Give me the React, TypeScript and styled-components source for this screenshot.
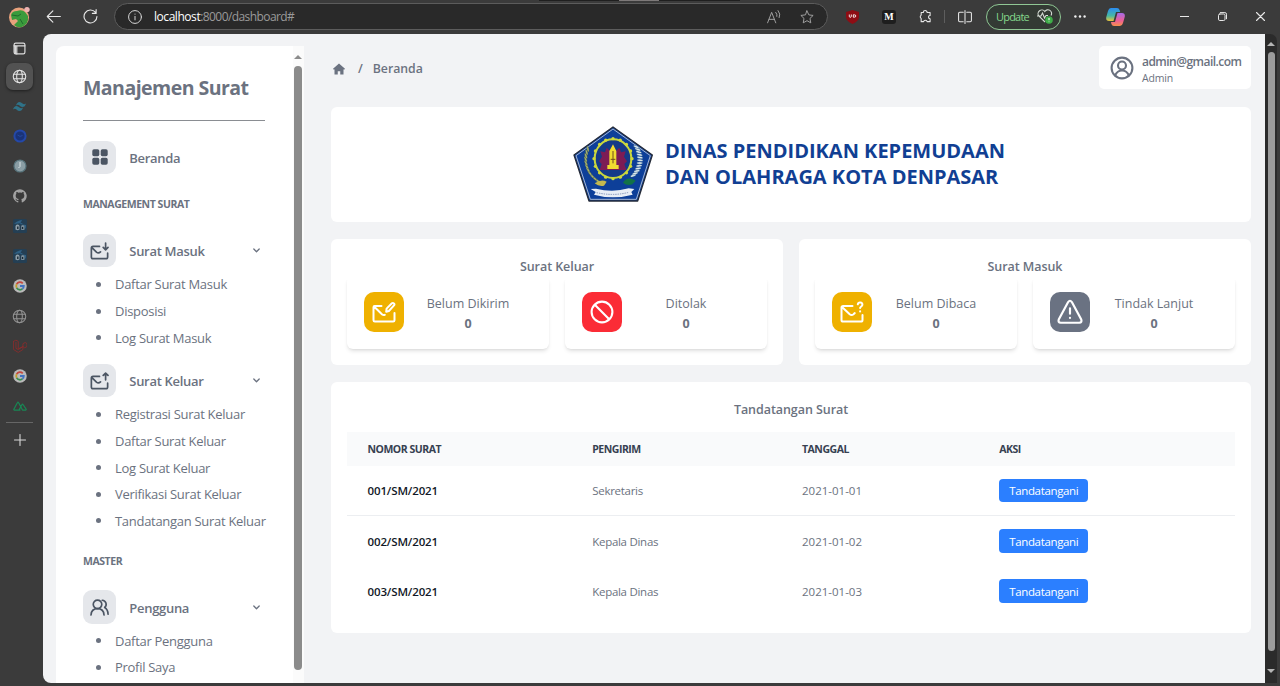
import React from "react";
import styled, { createGlobalStyle } from "styled-components";

const Global = createGlobalStyle`
  * { box-sizing: border-box; }
  body { margin: 0; background: #3b3b3b; overflow: hidden; font-family: "Open Sans", "Noto Sans", sans-serif; }
  h1, h2, h3, p, ul { margin: 0; padding: 0; font-weight: inherit; font-size: inherit; }
  svg { display: block; flex: none; }
  button { font-family: inherit; }
`;

const Window = styled.div`
  position: relative;
  display: flex;
  flex-direction: column;
  width: 1280px;
  height: 686px;
  background: #3b3b3b;
`;

/* ---------- browser chrome ---------- */
/* Handle that hangs over the top edge of the window. */
const EdgeHandle = styled.span`
  position: absolute;
  top: 0;
  left: 539px;
  width: 201px;
  height: 1px;
  background: linear-gradient(90deg, #1f1f1f 80px, #7d7979 80px, #7d7979 120px, #1f1f1f 120px);
`;
const TopBar = styled.header`
  display: flex;
  align-items: center;
  height: 34px;
  flex: none;
  padding: 0 8px 1px 8px;
  color: #e8e8e8;
`;
const AddressBar = styled.div`
  display: flex;
  align-items: center;
  width: 714px;
  height: 27px;
  margin-left: 16px;
  padding: 0 13px 0 13px;
  border: 1px solid #5c5c5c;
  border-radius: 14px;
  background: #292929;
`;
const Url = styled.div`
  flex: 1;
  margin-left: 12px;
  font-size: 12px;
  line-height: 16px;
  letter-spacing: -0.58px;
  color: #9a9a9a;
  white-space: nowrap;
`;
const Host = styled.span`
  color: #ffffff;
  letter-spacing: -0.45px;
`;
const Gap = styled.span<{ $w: number }>`
  flex: none;
  width: ${(p) => p.$w}px;
`;
const ToolDivider = styled.span`
  width: 1px;
  height: 13px;
  background: #5e5e5e;
`;
const MediumBadge = styled.span`
  width: 14px;
  height: 14px;
  border-radius: 3px;
  background: #1e1e1e;
  color: #fff;
  font: 700 10px/14px "Liberation Serif", serif;
  text-align: center;
`;
const UpdatePill = styled.span`
  display: flex;
  align-items: center;
  justify-content: space-between;
  width: 75px;
  height: 26px;
  padding: 0 7px 0 9px;
  border: 1px solid #8fc794;
  border-radius: 13px;
  background: #333a34;
  color: #84d88b;
  font-size: 11px;
  letter-spacing: -0.8px;
`;
const Body = styled.div`
  display: flex;
  flex: 1;
  min-height: 0;
  padding-bottom: 3px;
`;
const TabStrip = styled.nav`
  display: flex;
  flex-direction: column;
  align-items: center;
  width: 43px;
  margin-top: -1px;
  padding-right: 4px;
`;
const Tab = styled.span<{ $active?: boolean }>`
  display: flex;
  align-items: center;
  justify-content: center;
  flex: none;
  width: 27px;
  height: ${(p) => (p.$active ? 27 : 30)}px;
  margin-bottom: ${(p) => (p.$active ? 1 : 0)}px;
  border-radius: 7px;
  background: ${(p) => (p.$active ? "#525252" : "transparent")};
  box-shadow: ${(p) => (p.$active ? "0 1px 3px rgba(0,0,0,.5)" : "none")};
`;
const StripLine = styled.span`
  width: 27px;
  height: 1px;
  margin: 1px 0 2px;
  background: #666;
`;
const Page = styled.div`
  display: flex;
  width: 1222px;
  border-radius: 8px 0 0 8px;
  background: #f2f3f5;
  overflow: hidden;
`;
const Scroll = styled.div`
  display: flex;
  flex-direction: column;
  align-items: center;
  width: 12px;
  padding: 8px 0 7px;
  border-radius: 0 7px 0 0;
  background: #2b2b2b;
`;
const Thumb = styled.span`
  width: 7px;
  height: 599px;
  margin: 6px 0 18px;
  border-radius: 4px;
  background: #9c9c9c;
`;

/* ---------- sidebar ---------- */
const Sidebar = styled.aside`
  display: flex;
  width: 248px;
  margin: 12px 0 0 13px;
  border-radius: 8px 0 0 0;
  background: #fff;
  overflow: hidden;
`;
const Menu = styled.div`
  width: 237px;
  height: 637px;
  padding: 28px 28px 0 27px;
  color: #6b7280;
  white-space: nowrap;
`;
const Brand = styled.h1`
  padding-bottom: 18px;
  border-bottom: 1px solid #8a8d92;
  font-size: 19.5px;
  font-weight: 700;
  line-height: 28px;
  letter-spacing: -0.53px;
`;
const SideTrack = styled.div`
  width: 11px;
  padding: 9px 2px 0 1px;
  background: #fbfbfb;
`;
const SideThumb = styled.span`
  display: block;
  width: 8px;
  height: 604px;
  margin-top: 7px;
  border-radius: 4px;
  background: #8b8b8b;
`;
const MenuRow = styled.div<{ $top: number }>`
  display: flex;
  align-items: center;
  height: 33.3px;
  margin-top: ${(p) => p.$top}px;
  padding-right: 5px;
`;
const IconBox = styled.span`
  display: flex;
  align-items: center;
  justify-content: center;
  width: 33.3px;
  height: 33.3px;
  border-radius: 9px;
  background: #e5e7eb;
  color: #4b5563;
`;
const MenuLabel = styled.span`
  flex: 1;
  margin-left: 13px;
  padding-top: 1px;
  font-size: 13px;
  font-weight: 600;
  line-height: 18px;
  letter-spacing: -0.3px;
`;
const Section = styled.h2<{ $top: number }>`
  margin-top: ${(p) => p.$top}px;
  font-size: 10.5px;
  font-weight: 700;
  line-height: 16px;
  letter-spacing: -0.45px;
`;
const SubList = styled.ul`
  margin-top: 3.6px;
  padding-bottom: 0.3px;
  list-style: none;
`;
const SubItem = styled.li`
  display: flex;
  align-items: center;
  gap: 14px;
  height: 26.67px;
  padding-left: 13px;
  font-size: 13px;
  letter-spacing: -0.29px;
  &::before {
    content: "";
    flex: none;
    width: 5px;
    height: 5px;
    border-radius: 50%;
    background: #6b7280;
  }
`;

/* ---------- content ---------- */
const Content = styled.main`
  flex: 1;
  padding: 12px 14px 0 27px;
  color: #6b7280;
`;
const HeadRow = styled.div`
  display: flex;
  justify-content: space-between;
  height: 43px;
`;
const Crumbs = styled.div`
  display: flex;
  align-items: center;
  padding: 2px 0 0 2px;
  font-size: 12.3px;
  font-weight: 600;
  letter-spacing: -0.02px;
`;
const Slash = styled.span`
  margin: 0 10px 0 13px;
`;
const UserCard = styled.div`
  display: flex;
  align-items: center;
  width: 152px;
  border-radius: 5px;
  background: #fff;
  padding-left: 11px;
`;
const UserText = styled.div`
  margin-left: 8px;
  padding-top: 3px;
`;
const Email = styled.p`
  font-size: 12px;
  font-weight: 600;
  line-height: 17px;
  letter-spacing: -0.53px;
`;
const Role = styled.p`
  font-size: 10.5px;
  line-height: 16px;
  letter-spacing: -0.15px;
`;
const Card = styled.section`
  border-radius: 6px;
  background: #fff;
`;
const Banner = styled(Card)`
  display: flex;
  align-items: center;
  justify-content: center;
  gap: 12px;
  height: 115px;
  margin-top: 18px;
  padding-right: 4px;
`;
const BannerText = styled.div`
  padding-bottom: 2px;
  color: #113f93;
  font-size: 20px;
  font-weight: 700;
  line-height: 26px;
  white-space: nowrap;
`;
const Pair = styled.div`
  display: grid;
  grid-template-columns: 1fr 1fr;
  gap: 16px;
  margin-top: 17px;
`;
const StatCard = styled(Card)`
  height: 126px;
  padding: 18px 16px 0;
`;
const CardTitle = styled.h3`
  font-size: 12.5px;
  font-weight: 600;
  line-height: 19px;
  letter-spacing: -0.06px;
  text-align: center;
`;
const Tiles = styled.div`
  display: grid;
  grid-template-columns: 1fr 1fr;
  gap: 16px;
`;
const Tile = styled.div`
  display: flex;
  align-items: center;
  height: 73px;
  padding: 0 17px;
  border-radius: 6px;
  background: #fff;
  box-shadow: 0 3px 4px -1px rgba(0, 0, 0, 0.12), 0 1px 3px -1px rgba(0, 0, 0, 0.08);
  clip-path: inset(4px -8px -10px -8px);
`;
const TileIcon = styled.span<{ $bg: string }>`
  display: flex;
  align-items: center;
  justify-content: center;
  width: 40px;
  height: 40px;
  margin-bottom: 1px;
  border-radius: 10px;
  background: ${(p) => p.$bg};
  color: #fff;
`;
const TileText = styled.div`
  flex: 1;
  padding-top: 3px;
  font-size: 12.5px;
  line-height: 20px;
  text-align: center;
  white-space: nowrap;
`;
const Count = styled.p`
  font-weight: 700;
`;
const TableCard = styled(Card)`
  height: 250.5px;
  margin-top: 17px;
  padding: 18px 16px 0;
`;
const Columns = styled.div`
  display: grid;
  grid-template-columns: 224.7px 209.8px 197.3px 1fr;
  align-items: center;
  padding-left: 20.5px;
`;
const TableHead = styled(Columns)`
  height: 33.5px;
  margin-top: 13px;
  background: #f9fafb;
  color: #374151;
  font-size: 10.5px;
  font-weight: 700;
  letter-spacing: -0.48px;
`;
const TableRow = styled(Columns)<{ $line?: boolean }>`
  height: ${(p) => (p.$line ? 50.5 : 50)}px;
  border-bottom: ${(p) => (p.$line ? "1px solid #eceef1" : "none")};
  font-size: 11.5px;
  letter-spacing: -0.28px;
`;
const Num = styled.span`
  color: #111827;
  font-weight: 600;
  letter-spacing: -0.13px;
`;
const Day = styled.span`
  letter-spacing: 0;
`;
const SignButton = styled.button`
  justify-self: start;
  width: 89px;
  height: 23.5px;
  padding: 0;
  border: 0;
  border-radius: 4px;
  background: #2b7fff;
  color: #fff;
  font-size: 11.5px;
  line-height: 23px;
  letter-spacing: -0.34px;
`;

/* ---------- icons ---------- */
type LineProps = { w: number; h?: number; vb?: string; sw?: number; color?: string; children: React.ReactNode };
const Line = ({ w, h = w, vb = "0 0 24 24", sw = 1.8, color = "currentColor", children }: LineProps) => (
  <svg width={w} height={h} viewBox={vb} fill="none" stroke={color} strokeWidth={sw} strokeLinecap="round" strokeLinejoin="round">
    {children}
  </svg>
);
const Globe = ({ c }: { c: string }) => (
  <Line w={15} color={c} sw={1.7}>
    <circle cx="12" cy="12" r="10" />
    <ellipse cx="12" cy="12" rx="4.5" ry="10" />
    <path d="M3 8.5h18M3 15.5h18" />
  </Line>
);
const Google = () => (
  <svg width="14" height="14" viewBox="0 0 28 28">
    <circle cx="14" cy="14" r="13.5" fill="#b9b9b9" />
    <g fill="none" strokeWidth="3.6">
      <path d="M19.5 8.6A7.6 7.6 0 0 0 7.4 10.2" stroke="#c5483f" />
      <path d="M7.4 10.2a7.6 7.6 0 0 0 0 7.6" stroke="#c59d2c" />
      <path d="M7.4 17.8a7.6 7.6 0 0 0 11.4 2" stroke="#3a8e50" />
      <path d="M18.8 19.8a7.6 7.6 0 0 0 2.8-5.8H14" stroke="#4273c0" />
    </g>
  </svg>
);
const Deck = () => (
  <svg width="14" height="14" viewBox="0 0 14 14">
    <rect width="14" height="14" rx="1.5" fill="#243f54" />
    <path d="M1 5c3-3 6-4 8-4l-2 4 6 1v4L9 4z" fill="#2f6084" />
    <path d="M2.500 10.500V7.500q0-2 2-2t2 2v3q-2 1.500-4 0z" fill="#8e9ea8" />
    <path d="M8 10.500V8q0-2 1.800-2t1.800 2v2.500q-1.800 1.200-3.600 0z" fill="#7a8c98" />
    <path d="M4.800 7.500v2.500M9.500 8v2" stroke="#1a2a36" strokeWidth="1.400" />
  </svg>
);
const Chevron = () => (
  <Line w={7} h={5} vb="0 0 7 5" sw={1.3}>
    <path d="M.8 1l2.7 2.8L6.2 1" />
  </Line>
);
const Arrow = ({ down, w, c }: { down?: boolean; w: number; c: string }) => (
  <svg width={w} height={w / 2} viewBox="0 0 8 4">
    <path d={down ? "M0 0h8L4 4z" : "M0 4h8L4 0z"} fill={c} />
  </svg>
);
const MailIn = () => (
  <Line w={19} vb="137 333 56 56" sw={5}>
    <path d="M165 349H146q-5 0-5 5v26q0 5 5 5h38q5 0 5-5v-11M142 352l14 14q6 5 12-1M183 339v20M176 352l7 7 7-7" />
  </Line>
);
const MailOut = () => (
  <Line w={19} vb="137 333 56 56" sw={5}>
    <path d="M165 349H146q-5 0-5 5v26q0 5 5 5h38q5 0 5-5v-11M142 352l14 14q6 5 12-1M183 359v-20M176 346l7-7 7 7" />
  </Line>
);
const Users = () => (
  <Line w={19} sw={2.1}>
    <circle cx="9.5" cy="8" r="5.4" />
    <path d="M1.300 21.500c.3-5 3.500-8 8.200-8s7.900 3 8.200 8M15.500 2.800a5.200 5.200 0 0 1 3 9.200c2.700 1.500 4.200 4.800 4.300 8.500" />
  </Line>
);
const MailPen = () => (
  <Line w={24} sw={2}>
    <path d="M9.500 6H2.600C1.800 6 1.500 6.500 1.500 7.200v13c0 .9.600 1.400 1.400 1.400h18.200c.9 0 1.400-.6 1.400-1.400V13M2 6.500l8.200 8q1.300 1 2.600.3" />
    <path d="M14.200 11.700l.4-3.100 5.300-5.300q1-.8 2 .1t.1 2L16.900 11z" />
  </Line>
);
const MailAsk = () => (
  <Line w={24} sw={2}>
    <path d="M12.500 6H3.200C2 6 1.500 6.600 1.500 7.600v12.400c0 1 .6 1.600 1.600 1.600h17.800c1 0 1.600-.6 1.600-1.600V15M2 7l7.700 7.300q1.900 1.500 3.800 0l1.300-1.200" />
    <path d="M17.800 4.300c.4-2.600 4.700-2.300 4.600.4 0 1.700-2.300 1.900-2.300 3.400M20.100 11.300v.2" />
  </Line>
);
const Ban = () => (
  <Line w={24} sw={2.1}>
    <circle cx="12" cy="12" r="10.400" />
    <path d="M4.800 4.800l14.400 14.400" />
  </Line>
);
const Warning = () => (
  <Line w={26} sw={2}>
    <path d="M10.300 2.800Q12 .4 13.700 2.800l8.700 16.200q.9 2.700-1.900 2.900h-17q-2.800-.2-1.900-2.900zM12 8.500v5M12 17.300v.2" />
  </Line>
);

const Emblem = () => {
  const ring = Array.from({ length: 16 }, (_, i) => {
    const a = (i / 16) * Math.PI * 2;
    return <circle key={i} cx={159 + Math.cos(a) * 57} cy={146 + Math.sin(a) * 60} r="5" fill="#cfd93c" />;
  });
  const leaves = Array.from({ length: 12 }, (_, i) => {
    const a = 2.05 + (i / 11) * 1.5;
    const b = 0.72 - (i / 11) * 1.25;
    const [lx, ly] = [159 + Math.cos(a) * 82, 148 + Math.sin(a) * 78];
    const [rx, ry] = [159 + Math.cos(b) * 81, 148 + Math.sin(b) * 74];
    return (
      <g key={i}>
        <ellipse cx={lx} cy={ly} rx="9" ry="3.200" fill="#a9b568" stroke="#1d3a5c" transform={`rotate(${35 + i * 4} ${lx} ${ly})`} />
        <ellipse cx={rx} cy={ry} rx="9" ry="3.200" fill="#dfebef" stroke="#2f5f86" transform={`rotate(${-20 + i * 4} ${rx} ${ry})`} />
      </g>
    );
  });
  return (
    <svg width="80" height="77" viewBox="39 49 240 229">
      <path d="M159 51L277 135 233 273H87L42 135z" fill="#0d3f99" stroke="#252b38" strokeWidth="4" strokeLinejoin="round" />
      <path d="M159 57L271 137 229 268H91L48 137z" fill="none" stroke="#c5cfdd" strokeWidth="2.500" />
      {leaves}
      <ellipse cx="159" cy="146" rx="55" ry="58" fill="#153a88" stroke="#c6d53f" strokeWidth="6" />
      {ring}
      <path d="M119 180l6-18-8-8 9-14-5-16 14 3 5-14 10 10h18l10-10 5 14 14-3-5 16 9 14-8 8 6 18z" fill="#7d1c55" />
      <path d="M159 103l10 20v42h7v12h-34v-12h6v-42z" fill="#f1dc31" />
      <path d="M159 123v37M152 148h14" stroke="#734d1d" strokeWidth="3" />
      <path d="M189 218q10-16 28-11l10 5-10 11q-16 6-28-5z" fill="#127248" />
      <path d="M104 220q20-14 36-5l-8 12q-16 3-28-7z" fill="#c4b94f" />
      <path d="M92 237l16-1q50 13 98-1l17 2-9 9 4 8q-60 16-116 0l5-8z" fill="#e8eef6" />
      <path d="M110 248q50 11 96-1" fill="none" stroke="#7f91b8" strokeWidth="3" strokeDasharray="4 3" />
    </svg>
  );
};

const Group = ({ top, icon, label, items }: { top: number; icon: React.ReactNode; label: string; items: string[] }) => (
  <>
    <MenuRow $top={top}>
      <IconBox>{icon}</IconBox>
      <MenuLabel>{label}</MenuLabel>
      <Chevron />
    </MenuRow>
    <SubList>
      {items.map((i) => (
        <SubItem key={i}>{i}</SubItem>
      ))}
    </SubList>
  </>
);

const Stat = ({ bg, icon, label }: { bg: string; icon: React.ReactNode; label: string }) => (
  <Tile>
    <TileIcon $bg={bg}>{icon}</TileIcon>
    <TileText>
      <p>{label}</p>
      <Count>0</Count>
    </TileText>
  </Tile>
);

const letters = [
  ["001/SM/2021", "Sekretaris", "2021-01-01"],
  ["002/SM/2021", "Kepala Dinas", "2021-01-02"],
  ["003/SM/2021", "Kepala Dinas", "2021-01-03"],
];

const BrowserBar = () => (
  <TopBar>
    <svg width="22" height="22" viewBox="0 0 22 22">
      <circle cx="11" cy="11.500" r="10" fill="#e9a27c" />
      <path d="M3 9q1-4 6-4 5-2 8 1l3 4q1 8-6 11-5 1-8-2l4-4-2-2-4 1z" fill="#3a9b3c" />
      <path d="M4 9l6 1 3-2M12 13l3 5" stroke="#1f6b2c" fill="none" />
      <circle cx="19" cy="3.600" r="2.700" fill="#efb3b3" />
    </svg>
    <Gap $w={16} />
    <Line w={15} sw={1.7}><path d="M23 12H2M11 3l-9 9 9 9" /></Line>
    <Gap $w={22} />
    <Line w={15} sw={1.8}><path d="M20 5.500A10.300 10.300 0 1 0 22.300 12M21 1v6h-6" /></Line>
    <AddressBar>
      <Line w={14} sw={1.700} color="#d8d8d8"><circle cx="12" cy="12" r="11" /><path d="M12 11v6M12 7v.2" /></Line>
      <Url><Host>localhost</Host>:8000/dashboard#</Url>
      <Line w={14} sw={1.600} color="#a6a6a6"><path d="M1 22L8 4l7 18M3.500 16h9M15 4q3 3 2 7M19 1q5 6 2 12" /></Line>
      <Gap $w={19} />
      <Line w={14} sw={1.600} color="#a6a6a6"><path d="M12 1.500l3.200 6.900 7.300.9-5.400 5.200 1.400 7.500-6.500-3.700L5.500 22l1.400-7.500L1.500 9.300l7.300-.9z" /></Line>
    </AddressBar>
    <Gap $w={18} />
    <svg width="13" height="14" viewBox="0 0 13 14">
      <path d="M6.500 0L13 2v5q0 4-6.500 7Q0 11 0 7V2z" fill="#8e0d14" />
      <path d="M3.300 4.500v1.800q0 1 1 1t1-1V4.500M7.300 4.800h1q1.500 0 1.500 1.200T8.300 7.200h-1z" stroke="#fff" strokeWidth=".9" fill="none" />
    </svg>
    <Gap $w={23} />
    <MediumBadge>M</MediumBadge>
    <Gap $w={23} />
    <Line w={13} sw={2}><path d="M8 4.500a3.500 3.500 0 0 1 7 0h5.500V10M20.500 10a3 3 0 0 0 0 6v5.500H15a3.300 3.300 0 0 0-6.500 0H4V15.500a3.500 3.500 0 0 1 0-6V4.500h4" /></Line>
    <Gap $w={12} />
    <ToolDivider />
    <Gap $w={13} />
    <Line w={14} sw={1.800}><path d="M9 4H3q-2 0-2 2v12q0 2 2 2h6M15 4h6q2 0 2 2v12q0 2-2 2h-6M12 1v22" /></Line>
    <Gap $w={14} />
    <UpdatePill>
      Update
      <svg width="16" height="15" viewBox="0 0 16 15" fill="none">
        <path d="M8 13L1.800 7a3.600 3.600 0 0 1 6-4.500 3.600 3.600 0 0 1 6.200 4M0 7h4l1.500-3 2 5L9 6.500h2" stroke="#d5dcd5" strokeWidth="1.100" />
        <circle cx="12" cy="11" r="3.800" fill="#3fae49" />
        <path d="M12 9v2.200M12 12.600v.5" stroke="#fff" />
      </svg>
    </UpdatePill>
    <Gap $w={13} />
    <svg width="12" height="3" viewBox="0 0 12 3" fill="#f0f0f0"><circle cx="1.400" cy="1.500" r="1.200" /><circle cx="6" cy="1.500" r="1.200" /><circle cx="10.600" cy="1.500" r="1.200" /></svg>
    <Gap $w={20} />
    <svg width="19" height="18" viewBox="0 0 19 18">
      <defs>
        <linearGradient id="cool" x1="0" y1="0" x2="0" y2="1"><stop offset="0" stopColor="#2b8df2" /><stop offset=".6" stopColor="#45b8a5" /><stop offset="1" stopColor="#e8c43a" /></linearGradient>
        <linearGradient id="warm" x1="0" y1="0" x2="0" y2="1"><stop offset="0" stopColor="#a66be8" /><stop offset=".6" stopColor="#ef5f92" /><stop offset="1" stopColor="#f7914b" /></linearGradient>
      </defs>
      <path d="M5 0h6q2 0 2.600 2l.6 2H10L7.500 13H3Q-.5 13 .3 9L2 3Q2.800 0 5 0z" fill="url(#cool)" />
      <path d="M14 18H8q-2 0-2.600-2L5 14h4l2.500-9H16q3.500 0 2.700 4L17 15q-.8 3-3 3z" fill="url(#warm)" />
    </svg>
    <Gap $w={55} />
    <Line w={9} vb="0 0 9 9" sw={1.100}><path d="M0 4.500h9" /></Line>
    <Gap $w={29} />
    <Line w={9} vb="0 0 9 9" sw={1}><rect x=".5" y="2" width="6.500" height="6.500" rx="1.300" /><path d="M2.300.6h4.600q1.600 0 1.600 1.600v4.600" /></Line>
    <Gap $w={29} />
    <Line w={9} vb="0 0 9 9" sw={1.100}><path d="M.5.5l8 8M8.500.5l-8 8" /></Line>
  </TopBar>
);

const VerticalTabs = () => (
  <TabStrip>
    <Tab><Line w={13} sw={2.200} color="#dcdcdc"><rect x="2" y="2" width="20" height="20" rx="3" /><path d="M2 7h20M7 7v15" /><path d="M4 8v13" strokeWidth="3" /></Line></Tab>
    <Tab $active><Globe c="#e4e4e4" /></Tab>
    <Tab>
      <svg width="13" height="9" viewBox="0 0 26 18" fill="#2f7288"><path d="M6 7q2-7 7-7 3 0 6 3t7 0q-2 7-7 7-3 0-6-3T6 7zM0 15q2-7 7-7 3 0 6 3t7 0q-2 7-7 7-3 0-6-3t-7 0z" /></svg>
    </Tab>
    <Tab>
      <svg width="14" height="14" viewBox="0 0 14 14"><circle cx="7" cy="7" r="5.600" fill="#1a3378" stroke="#2448a8" strokeWidth="2" /><path d="M4.500 6q2.500 2.500 5 .5" stroke="#2448a0" fill="none" /></svg>
    </Tab>
    <Tab>
      <svg width="14" height="14" viewBox="0 0 14 14"><circle cx="7" cy="7" r="6" fill="#8a9da4" stroke="#58747c" strokeWidth="1.200" /><path d="M7 3v4.500L5.500 9" stroke="#dce4e6" fill="none" /></svg>
    </Tab>
    <Tab>
      <svg width="14" height="14" viewBox="0 0 24 24" fill="#a2a2a2"><path d="M12 .6a11.500 11.500 0 0 0-3.700 22.500c.6.1.8-.3.8-.6v-2.200c-3.200.7-3.900-1.400-3.900-1.400-.5-1.300-1.300-1.700-1.300-1.700-1-.7.100-.7.100-.7 1.200.1 1.800 1.200 1.800 1.200 1 1.800 2.700 1.300 3.400 1 .1-.8.400-1.300.7-1.600-2.600-.3-5.300-1.300-5.300-5.700 0-1.300.5-2.300 1.200-3.100-.1-.3-.5-1.500.1-3.100 0 0 1-.3 3.200 1.200a11 11 0 0 1 5.800 0c2.200-1.500 3.200-1.200 3.200-1.200.6 1.600.2 2.800.1 3.100.7.800 1.200 1.800 1.200 3.100 0 4.400-2.700 5.400-5.300 5.700.4.400.8 1.100.8 2.100v3.200c0 .3.200.7.8.6A11.500 11.500 0 0 0 12 .6z" /></svg>
    </Tab>
    <Tab><Deck /></Tab>
    <Tab><Deck /></Tab>
    <Tab><Google /></Tab>
    <Tab><Globe c="#929292" /></Tab>
    <Tab>
      <Line w={14} sw={1.500} color="#8a2c2b"><path d="M1 4l4-2 4 2v13l8-4V8l4-2 3 2v5l-4 2-3-2M1 4v14l8 5 8-5v-5M5 6v10l4 2 8-5" /></Line>
    </Tab>
    <Tab><Google /></Tab>
    <Tab>
      <Line w={14} h={10} vb="0 0 28 20" sw={2.500} color="#188754"><path d="M14 18H3q-2 0-1-2L9 3q1-2 2 0l8 15h6q2 0 1-2l-6-9q-1-2-2 0l-6 11" /></Line>
    </Tab>
    <StripLine />
    <Tab><Line w={12} vb="0 0 12 12" sw={1.100} color="#d8d8d8"><path d="M6 .5v11M.5 6h11" /></Line></Tab>
  </TabStrip>
);

export default function App() {
  return (
    <Window>
      <Global />
      <EdgeHandle />
      <BrowserBar />
      <Body>
        <VerticalTabs />
        <Page>
          <Sidebar>
            <Menu>
              <Brand>Manajemen Surat</Brand>
              <MenuRow $top={19.6}>
                <IconBox>
                  <svg width="16" height="16" viewBox="0 0 16 16" fill="currentColor"><rect x=".3" y=".3" width="7" height="7" rx="1.700" /><rect x="8.700" y=".3" width="7" height="7" rx="1.700" /><rect x=".3" y="8.700" width="7" height="7" rx="1.700" /><rect x="8.700" y="8.700" width="7" height="7" rx="1.700" /></svg>
                </IconBox>
                <MenuLabel>Beranda</MenuLabel>
              </MenuRow>
              <Section $top={22.4}>MANAGEMENT SURAT</Section>
              <Group top={21.9} icon={<MailIn />} label="Surat Masuk" items={["Daftar Surat Masuk", "Disposisi", "Log Surat Masuk"]} />
              <Group top={12.8} icon={<MailOut />} label="Surat Keluar" items={["Registrasi Surat Keluar", "Daftar Surat Keluar", "Log Surat Keluar", "Verifikasi Surat Keluar", "Tandatangan Surat Keluar"]} />
              <Section $top={18}>MASTER</Section>
              <Group top={21.9} icon={<Users />} label="Pengguna" items={["Daftar Pengguna", "Profil Saya"]} />
            </Menu>
            <SideTrack>
              <Arrow w={8} c="#8b8b8b" />
              <SideThumb />
            </SideTrack>
          </Sidebar>
          <Content>
            <HeadRow>
              <Crumbs>
                <svg width="12" height="12" viewBox="0 0 24 24" fill="currentColor"><path d="M12 1L0 11.500l1.800 2L3 12.500V23h6.500v-6.500h5V23H21V12.500l1.200 1 1.800-2z" /></svg>
                <Slash>/</Slash>
                Beranda
              </Crumbs>
              <UserCard>
                <Line w={24} sw={2.1}><circle cx="12" cy="12" r="10.400" /><circle cx="12" cy="9.500" r="4" /><path d="M5 19.500c1.500-3.300 4-5 7-5s5.500 1.700 7 5" /></Line>
                <UserText>
                  <Email>admin@gmail.com</Email>
                  <Role>Admin</Role>
                </UserText>
              </UserCard>
            </HeadRow>
            <Banner>
              <Emblem />
              <BannerText>
                <p>DINAS PENDIDIKAN KEPEMUDAAN</p>
                <p>DAN OLAHRAGA KOTA DENPASAR</p>
              </BannerText>
            </Banner>
            <Pair>
              <StatCard>
                <CardTitle>Surat Keluar</CardTitle>
                <Tiles>
                  <Stat bg="#efb100" icon={<MailPen />} label="Belum Dikirim" />
                  <Stat bg="#fb2c36" icon={<Ban />} label="Ditolak" />
                </Tiles>
              </StatCard>
              <StatCard>
                <CardTitle>Surat Masuk</CardTitle>
                <Tiles>
                  <Stat bg="#efb100" icon={<MailAsk />} label="Belum Dibaca" />
                  <Stat bg="#6a7282" icon={<Warning />} label="Tindak Lanjut" />
                </Tiles>
              </StatCard>
            </Pair>
            <TableCard>
              <CardTitle>Tandatangan Surat</CardTitle>
              <TableHead>
                <span>NOMOR SURAT</span>
                <span>PENGIRIM</span>
                <span>TANGGAL</span>
                <span>AKSI</span>
              </TableHead>
              {letters.map(([num, from, day], i) => (
                <TableRow key={num} $line={i === 0}>
                  <Num>{num}</Num>
                  <span>{from}</span>
                  <Day>{day}</Day>
                  <SignButton>Tandatangani</SignButton>
                </TableRow>
              ))}
            </TableCard>
          </Content>
        </Page>
        <Scroll>
          <Arrow w={8} c="#b5b5b5" />
          <Thumb />
          <Arrow down w={8} c="#b5b5b5" />
        </Scroll>
      </Body>
    </Window>
  );
}
